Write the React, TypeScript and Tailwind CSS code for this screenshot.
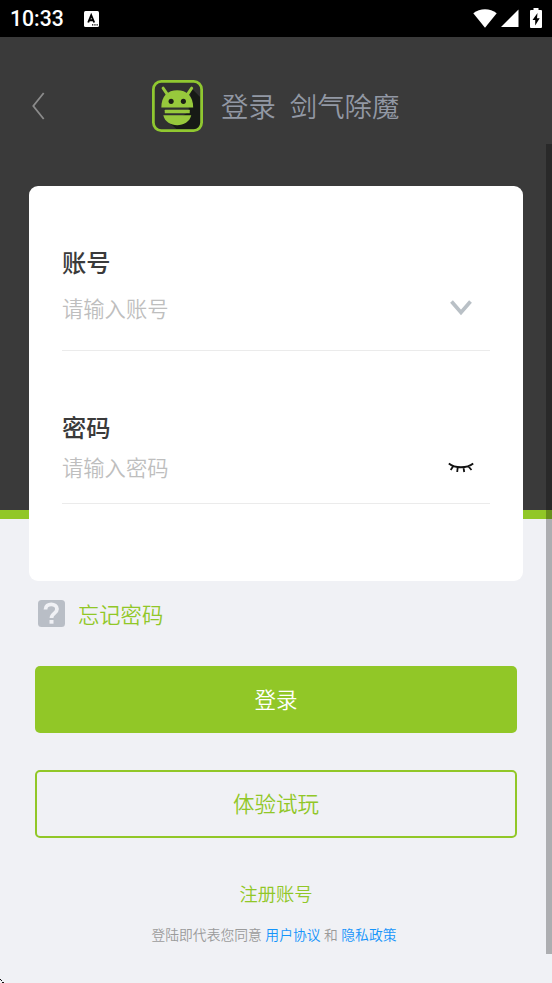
import React from 'react'

interface FieldProps {
  label: string
  type: string
  placeholder: string
  className: string
  inputClassName: string
  children: React.ReactNode
}

function Field({
  label,
  type,
  placeholder,
  className,
  inputClassName,
  children,
}: FieldProps) {
  return (
    <label className={`flex flex-col border-b border-[#ebebeb] ${className}`}>
      <span className="text-[24.3px] leading-8 font-medium text-[#3a3a3a]">
        {label}
      </span>
      <div className={`flex items-center h-8 ${inputClassName}`}>
        <input
          type={type}
          placeholder={placeholder}
          className="flex-1 min-w-0 h-8 pb-px text-[21.3px] font-[350] bg-transparent outline-none placeholder:text-[#bebebe]"
        />
        {children}
      </div>
    </label>
  )
}

function StatusBar() {
  return (
    <div className="flex items-center h-[37px] pl-[10px] pr-[9px] bg-black text-white">
      <span className="w-[74px] pt-px font-['Roboto',sans-serif] text-[21.2px] font-medium leading-none">
        10:33
      </span>
      <svg width="15" height="16" viewBox="0 0 15 16">
        <rect width="15" height="16" rx="1.5" fill="#fff" />
        <path
          d="M4.2 11.5 7.2 4.2 10.2 11.5M5.2 9.3h4"
          fill="none"
          stroke="#000"
          strokeWidth="1.9"
        />
        <path d="M8 13.8h1.3M10.3 13.8h1.3M12.5 13.8h1.3" stroke="#000" strokeWidth="1.2" />
      </svg>
      <div className="flex items-center ml-auto -mt-px">
        <svg width="24" height="19" viewBox="0 0 24 19" fill="#fff">
          <path d="M0.3 4.3C7-1.1 17-1.1 23.7 4.3L12 18.7Z" />
        </svg>
        <svg className="ml-[4px]" width="18" height="18" viewBox="0 0 18 18" fill="#fff">
          <path d="M17.500 0.500v17.500H0Z" />
        </svg>
        <svg className="ml-[11px] mr-px" width="12" height="20" viewBox="0 0 12 20">
          <path
            d="M3.5 0h5v2H11a1 1 0 0 1 1 1v16a1 1 0 0 1-1 1H1a1 1 0 0 1-1-1V3a1 1 0 0 1 1-1h2.500Z"
            fill="#fff"
          />
          <path d="M7.500 5 2.500 12h2.700v5.500L9.700 10.200H7Z" fill="#000" />
        </svg>
      </div>
    </div>
  )
}

function Logo() {
  return (
    <svg width="51" height="52" viewBox="0 0 52 52" preserveAspectRatio="none">
      <rect x="1.500" y="1.500" width="49" height="49" rx="7.500" fill="#303030" />
      <path d="M40 8 49 17v26q0 6-6 6H25l-6-5 18-12Z" fill="#171a16" />
      <rect
        x="1.400"
        y="1.400"
        width="49.200"
        height="49.200"
        rx="8"
        fill="none"
        stroke="#90c830"
        strokeWidth="2.800"
      />
      <g fill="#97c93c">
        <path d="M9.500 27.500C9.500 16 16 10.200 25.700 10.200S42 16 42 27.500Z" />
        <rect x="13" y="29.700" width="25.500" height="3.500" rx=".5" />
        <path d="M11.500 35.300h28.500C38.500 42 32 45.200 25.700 45.200S13 42 11.500 35.300Z" />
      </g>
      <path
        d="m11.300 8.200 4.500 6.500M40.500 8.200l-4.500 6.500"
        stroke="#97c93c"
        strokeWidth="3"
        strokeLinecap="round"
      />
      <circle cx="19.500" cy="21.300" r="2.600" fill="#1c1f16" />
      <circle cx="32" cy="21.300" r="2.600" fill="#1c1f16" />
    </svg>
  )
}

export default function App() {
  return (
    <div className="relative flex flex-col w-[552px] h-[983px] overflow-hidden bg-[linear-gradient(to_bottom,#3a3a3a_510px,#91c727_510px,#91c727_519px,#f0f1f5_519px)] font-['Noto_Sans_CJK_SC',sans-serif]">
      <StatusBar />

      <header className="flex items-center h-[149px] pb-[11px] pl-8">
        <svg width="13" height="28" viewBox="0 0 13 28" fill="none">
          <path d="M11.700 1 1.300 14 11.700 27" stroke="#8b8b8b" strokeWidth="1.800" />
        </svg>
        <div className="flex items-center ml-[107px]">
          <Logo />
          <h1 className="flex gap-[14px] ml-[18px] pb-[3px] text-[27.4px] leading-10 font-[350] text-[#9298a4]">
            <span>登录</span>
            <span>剑气除魔</span>
          </h1>
        </div>
      </header>

      <main className="flex flex-col">
        <section className="h-[395px] mx-[29px] px-[33px] pt-[60px] rounded-[9px] bg-white">
          <Field
            label="账号"
            type="text"
            placeholder="请输入账号"
            className="h-[105px]"
            inputClassName="mt-[14px]"
          >
            <svg className="mr-[18px]" width="22" height="16" viewBox="0 0 22 16" fill="none">
              <path d="m1.500 1.500 9.500 11 9.500-11" stroke="#b9c0c6" strokeWidth="3.700" />
            </svg>
          </Field>
          <Field
            label="密码"
            type="password"
            placeholder="请输入密码"
            className="h-[93px] mt-[60px]"
            inputClassName="mt-[8px]"
          >
            <svg
              className="mt-px mr-[16px]"
              width="26"
              height="12"
              viewBox="0 0 26 12"
              fill="none"
              stroke="#111"
              strokeWidth="1.800"
            >
              <path d="M.8 1.500C7 6.500 19 6.500 25.200 1.500M5 4.500 2.700 8M9.700 5.300 9.200 10M15.500 5.300l.7 4.700M20.500 4.500 23.500 8" />
            </svg>
          </Field>
        </section>

        <a className="flex items-center self-start h-8 mt-[17px] ml-[38px] text-[21.3px] font-[350] text-[#91c727]">
          <svg className="mr-[13px] -mt-px" width="27" height="27" viewBox="0 0 27 27">
            <rect width="27" height="27" rx="3.500" fill="#b9bec6" />
            <path
              d="M7.500 9.500C7.500 2.500 19 2.800 19 9c0 4.500-5.500 4.300-5.500 9"
              fill="none"
              stroke="#f0f1f5"
              strokeWidth="3.800"
            />
            <path d="M11.500 20h4v3.700h-4Z" fill="#f0f1f5" />
          </svg>
          <span className="pb-px">忘记密码</span>
        </a>

        <div className="flex flex-col gap-[37px] mt-[36px] px-[35px]">
          <button className="h-[67px] rounded-[5px] bg-[#91c727] text-[21.5px] font-[350] text-white">
            登录
          </button>
          <button className="h-[68px] pb-0.5 border-2 border-[#91c727] rounded-[5px] text-[21.5px] font-[350] text-[#91c727]">
            体验试玩
          </button>
        </div>

        <a className="self-center mt-[41px] text-[18.300px] leading-7 font-[350] text-[#91c727]">
          注册账号
        </a>
        <p className="flex justify-center gap-[3.500px] mt-[17px] mr-1 text-[13.800px] leading-5 font-[350] text-[#9b9b9b]">
          <span>登陆即代表您同意</span>
          <a className="text-[#1494fb]">用户协议</a>
          <span>和</span>
          <a className="text-[#1494fb]">隐私政策</a>
        </p>
      </main>

      {/* scroll indicator */}
      <div className="absolute top-[144px] right-0 w-1.5 h-[810px] bg-black/28" />

      <svg className="absolute bottom-0 left-0" width="4" height="4" viewBox="0 0 4 4">
        <path d="M0 0h1v1H0ZM1 1h1v1H1ZM2 3h2v1H2Z" fill="#111" />
      </svg>
    </div>
  )
}
